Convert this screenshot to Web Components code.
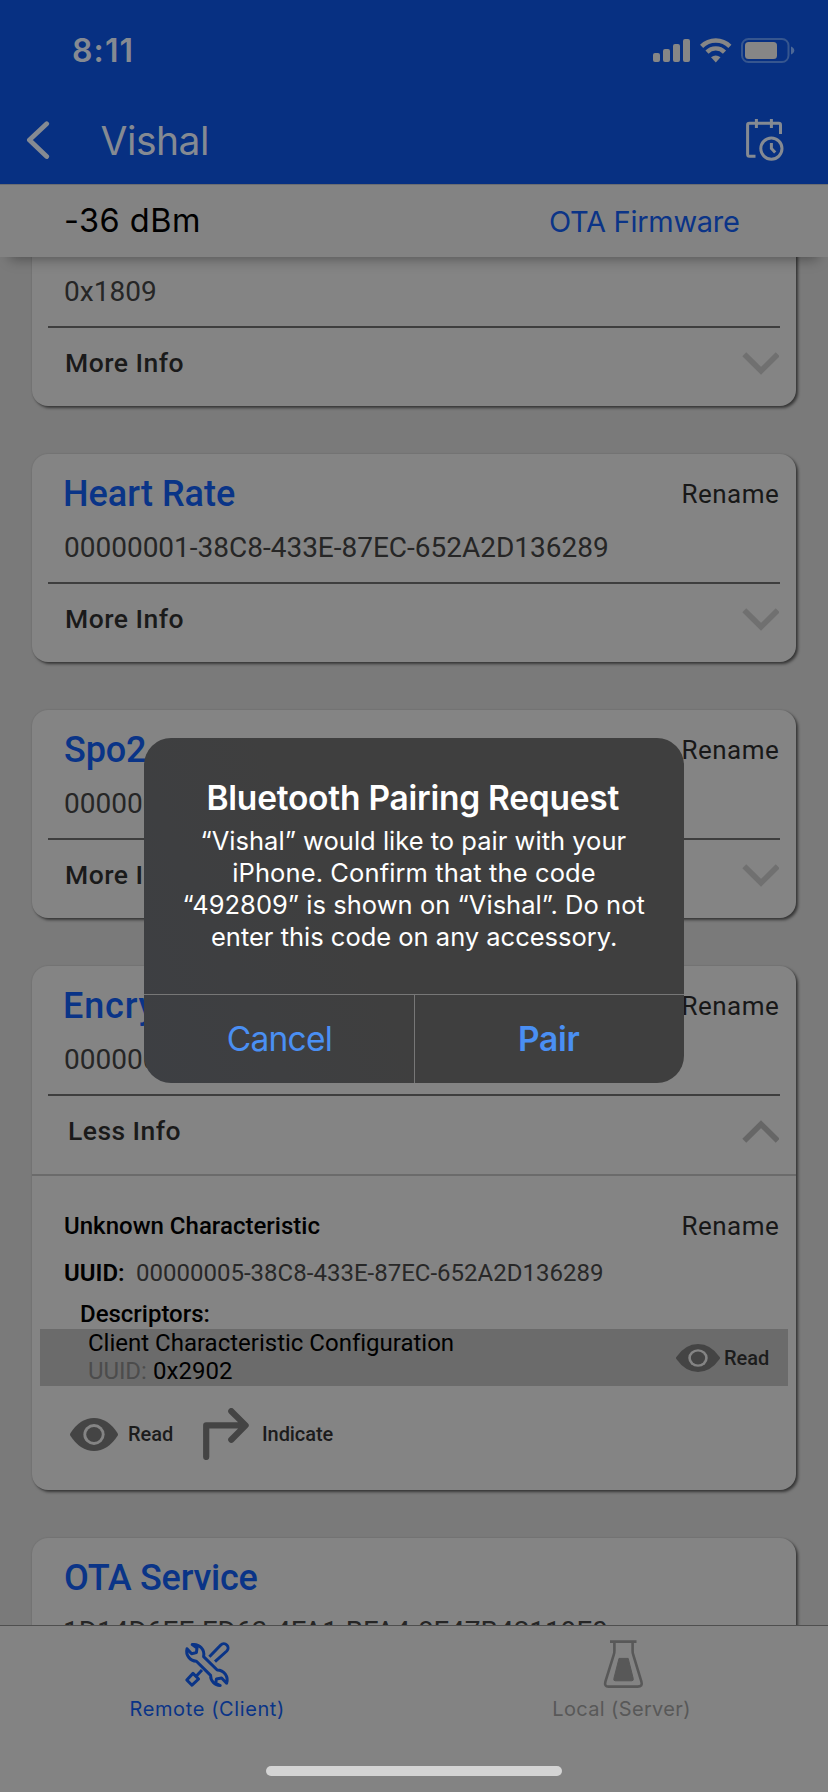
<!DOCTYPE html>
<html lang="en">
<head>
<meta charset="utf-8">
<title>Vishal</title>
<style>
html,body{margin:0;padding:0}
body{width:828px;height:1792px;overflow:hidden;background:#7a7a7a;font-family:Roboto,"Liberation Sans",sans-serif}
</style>
</head>
<body>
<device-screen></device-screen>
<script>
const UI = 'Inter,"Liberation Sans",sans-serif';
function define(name, html, after) {
  const t = document.createElement('template');
  t.innerHTML = html;
  customElements.define(name, class extends HTMLElement {
    connectedCallback() {
      if (this.shadowRoot) return;
      this.attachShadow({mode: 'open'}).append(t.content.cloneNode(true));
      if (after) after(this, this.shadowRoot);
    }
  });
}

/* One line of text, tracked so that its glyphs span exactly `w` pixels. */
define('ui-text', `<style>:host{display:block;white-space:nowrap;flex:none}span{display:block;white-space:pre}</style><span></span>`, (el, root) => {
  const span = root.querySelector('span');
  const text = el.getAttribute('text');
  span.textContent = text;
  const w = parseFloat(el.getAttribute('w'));
  const cs = getComputedStyle(el);
  const ctx = document.createElement('canvas').getContext('2d');
  ctx.font = `${cs.fontWeight} ${cs.fontSize} ${cs.fontFamily}`;
  const m = ctx.measureText(text);
  const ink = m.actualBoundingBoxLeft + m.actualBoundingBoxRight;
  el.style.width = w + 'px';
  span.style.letterSpacing = ((w - ink) / (text.length - 1)).toFixed(3) + 'px';
  span.style.marginLeft = m.actualBoundingBoxLeft.toFixed(2) + 'px';
});

define('eye-icon', `<style>:host{display:block;flex:none}svg{display:block;width:100%;height:100%}</style>
<svg viewBox="0 0 47 33" preserveAspectRatio="none"><path d="M.4 15.2Q10 0 23.5 0T46.6 15.2Q47.4 16.5 46.6 17.8Q37 33 23.5 33T.4 17.8Q-.4 16.5 .4 15.2Z" fill="#444"/><circle cx="23.5" cy="16.5" r="10.4" fill="#848484"/><circle cx="23.5" cy="16.5" r="7.6" fill="#444"/></svg>`);

define('chevron-icon', `<style>:host{display:block;flex:none;width:37px;height:23px;color:#707070}:host([up]){color:#666}:host([up]) svg{transform:scaleY(-1)}svg{display:block}</style>
<svg width="37" height="23" viewBox="0 0 37 23" fill="none" stroke="currentColor" stroke-width="5.6"><path d="M2.3 2.3L19 18.8L35.7 2.3"/></svg>`);

define('status-bar', `<style>
:host{display:flex;height:98px;box-sizing:border-box;padding:0 33px 0 73px;justify-content:space-between;align-items:center;color:#858a92;font:600 32px/98px ${UI}}
ui-text{margin-top:3px}svg{display:block;margin-top:3px}</style>
<ui-text text="8:11" w="58.5"></ui-text>
<svg width="142" height="26" viewBox="0 0 142 26" fill="#868686"><rect x="0" y="15" width="7" height="9" rx="2"/><rect x="10" y="11" width="7" height="13" rx="2"/><rect x="20" y="6" width="7" height="18" rx="2"/><rect x="30" y="1" width="7" height="23" rx="2"/>
<g fill="none" stroke="#868686" stroke-width="4.4"><path d="M48.6 8.4A20 20 0 0 1 76.9 8.4"/><path d="M54 14.1A12.2 12.2 0 0 1 71.5 14.1"/></g><path d="M58 19.3Q62.8 15.7 67.5 19.3L62.8 24.6Z"/>
<rect x="89" y="1" width="46.5" height="23" rx="6.5" fill="none" stroke="#36568f" stroke-width="2"/><rect x="92" y="4" width="32" height="17" rx="3.5"/><path d="M138 8.5Q141.3 9.8 141.3 12.5T138 16.5Z" fill="#4c6796"/></svg>`);

define('nav-bar', `<style>
:host{display:flex;height:86px;box-sizing:border-box;padding:0 42px 0 26px;align-items:center;color:#858a92;font:400 39px/86px ${UI}}
svg{display:block}.cal{margin:-3px 0 0 auto}ui-text{margin-left:49.5px;line-height:81px;height:83px}</style>
<svg width="25" height="40" viewBox="0 0 25 40" fill="none" stroke="#858a92" stroke-width="4.8" stroke-linecap="round" stroke-linejoin="round"><path d="M20.7 2.8L3.4 19L20.7 35.5"/></svg>
<ui-text text="Vishal" w="106.5"></ui-text>
<svg class="cal" width="41" height="44" viewBox="0 0 41 44" fill="none" stroke="#858a92" stroke-width="3"><path d="M35.5 16V7Q35.5 5.3 33.8 5.3H4.4Q2.6 5.3 2.6 7V36.3Q2.6 38.3 4.4 38.3H10.5M11.4 1V10M26.4 1V10M26.4 25V30.5L30.2 34.6"/><circle cx="26.4" cy="30.6" r="10.6"/></svg>`);

define('signal-bar', `<style>
:host{display:flex;position:relative;z-index:1;height:73px;box-sizing:border-box;border-top:1px solid #6b6d72;padding:0 89px 0 66px;justify-content:space-between;background:#838383;box-shadow:0 12px 12px -10px rgba(0,0,0,.36);font-family:${UI}}
.a{font-size:32.5px;line-height:71px;color:#000}.b{font-size:29px;line-height:74px;color:#0b3487}</style>
<ui-text class="a" text="-36 dBm" w="132"></ui-text><ui-text class="b" text="OTA Firmware" w="189"></ui-text>`);

define('service-card', `<style>
:host{display:block;flex:none;background:#848484;border-radius:16px;box-shadow:2px 2px 3px rgba(0,0,0,.55),0 0 2px rgba(0,0,0,.12);padding-bottom:8px}
.row{display:flex;justify-content:space-between;padding:0 18px 0 33px}
.head{height:80px;line-height:80px}
.name{font-size:36px;font-weight:500;color:#0a3487}
.ren{font-size:26px;line-height:81px;color:#181818}
.uuid{height:27px;line-height:27px;font-size:28px;color:#262626;padding-bottom:21px}
.rule{height:2px;margin:0 16px;background:#3e3e3e}
.more{height:70px;line-height:70px;font-size:26.5px;font-weight:500;color:#1a1a1a;padding:0 17px 0 34px;align-items:center}
:host([open]) .more{padding-left:37px}
</style>
<div class="row head"></div><div class="row uuid"></div><div class="rule"></div><div class="row more"></div><slot></slot>`, (el, root) => {
  const a = n => el.getAttribute(n);
  const open = el.hasAttribute('open');
  root.querySelector('.head').innerHTML =
    (a('name') ? `<ui-text class="name" text="${a('name')}" w="${a('nw')}"></ui-text>` : '') +
    (el.hasAttribute('renamable') ? '<ui-text class="ren" text="Rename" w="94.5"></ui-text>' : '');
  root.querySelector('.uuid').innerHTML = `<ui-text text="${a('uuid')}" w="${a('uw')}"></ui-text>`;
  root.querySelector('.more').innerHTML = open
    ? `<ui-text text="Less Info" w="111.5"></ui-text><chevron-icon up></chevron-icon>`
    : `<ui-text text="More Info" w="117.5"></ui-text><chevron-icon></chevron-icon>`;
});

define('characteristic-detail', `<style>
:host{display:block;margin-top:8px;border-top:2px solid #6b6b6b;padding-top:25px;color:#000;font-size:24px}
.top{display:flex;justify-content:space-between;height:50px;line-height:50px;padding:0 18px 0 33px}
.top .ren{font-size:26px;line-height:51px;color:#181818}
.id{display:flex;gap:13px;height:43px;line-height:44px;padding-left:33px}
.v{color:#282828}
.m{font-weight:500}
.desc{margin:4px 0 0 49px;height:31px;line-height:32px}
.band{display:flex;justify-content:space-between;align-items:center;margin:0 8px;height:57px;background:#6b6b6b;padding:0 19px 0 49px}
.l1{line-height:28px}.l2{display:flex;gap:8px;line-height:28px;margin-bottom:2px}.g{color:#4c4c4c}
.act{display:flex;align-items:center;font-size:20px;font-weight:500;color:#1c1c1c}
.read{gap:5px}.read eye-icon{width:44px;height:28px}
.acts{height:96px;padding-left:38px}
.acts eye-icon{width:48px;height:33px;margin-right:11px}
.acts svg{margin:0 14px 0 30px;display:block}
</style>
<div class="top"><ui-text class="m" text="Unknown Characteristic" w="254.5"></ui-text><ui-text class="ren" text="Rename" w="94.5"></ui-text></div>
<div class="id"><ui-text style="font-weight:600" text="UUID:" w="59"></ui-text><ui-text class="v" text="00000005-38C8-433E-87EC-652A2D136289" w="465"></ui-text></div>
<div class="desc"><ui-text class="m" text="Descriptors:" w="127.5"></ui-text></div>
<div class="band"><div><ui-text class="l1" text="Client Characteristic Configuration" w="363"></ui-text><div class="l2"><ui-text class="g" text="UUID:" w="57"></ui-text><ui-text text="0x2902" w="78"></ui-text></div></div>
<div class="act read"><eye-icon></eye-icon><ui-text text="Read" w="44"></ui-text></div></div>
<div class="act acts"><eye-icon></eye-icon><ui-text text="Read" w="44"></ui-text>
<svg width="46" height="52" viewBox="0 0 46 52" fill="none" stroke="#444" stroke-width="6.2" stroke-linecap="round" stroke-linejoin="round"><path d="M3.2 49V17.4H42M28.3 3.2L42.6 17.4L28.3 31.8"/></svg>
<ui-text text="Indicate" w="70.5"></ui-text></div>`);

define('service-list', `<style>
:host{display:block;height:1368px;overflow:hidden;background:#7a7a7a}
div{display:flex;flex-direction:column;gap:48px;margin:-59px 32px 0}</style>
<div><slot></slot></div>`);

define('tab-bar', `<style>
:host{display:block;height:167px;box-sizing:border-box;border-top:1px solid #4f4f4f;background:#838383;font:400 20px/26px ${UI}}
.tabs{display:flex}
.tab{flex:1;display:flex;flex-direction:column;align-items:center;height:140px;box-sizing:border-box;padding-top:13px}
svg{display:block;width:48px;height:50px;margin-bottom:7px}
.on{color:#0a3487;padding-right:1px}.off{color:#585858}
.home{width:296px;height:10px;border-radius:5px;background:#d4d4d4;margin:0 auto}</style>
<div class="tabs"><div class="tab on">
<svg viewBox="0 0 48 50" fill="none" stroke="currentColor" stroke-width="3" stroke-linejoin="round"><path d="M9.2 5.6A10 10 0 0 1 20.6 17.6L34.2 31A10 10 0 0 1 43.6 44.2L38.6 39L33.4 40L32.8 44.2L37.2 46.6A10 10 0 0 1 27.6 36.4L13.4 22.2A10 10 0 0 1 4 9.8L8.6 14.8L13.4 13.6L14 9Z"/><path d="M26.4 17.8L37.8 6A4.2 4.2 0 0 1 43.8 12L32 22.6M19 31L13.4 37M10 34.4L15.6 40L9 46.2L3.8 41Z"/></svg>
<ui-text text="Remote (Client)" w="152.5"></ui-text></div>
<div class="tab off">
<svg viewBox="0 0 48 50" fill="none" stroke="currentColor" stroke-width="2.6" stroke-linejoin="round"><path d="M13 2.6H39.5M17.4 3V12Q17.4 14 16.8 15.6L8.4 42.6Q7 47.6 11.6 47.6H40.6Q46 47.6 44.4 42.6L36.2 15.6Q35.6 14 35.6 12V3"/><path d="M22 19.4H31.2L36.2 39.4Q36.8 41.8 34.6 41.8H18.4Q16.2 41.8 16.9 39.4Z" fill="currentColor" stroke-width="1"/></svg>
<ui-text text="Local (Server)" w="136"></ui-text></div></div>
<div class="home"></div>`);

define('pairing-dialog', `<style>
:host{display:block;position:absolute;left:144px;top:738px;width:540px;height:344.5px;border-radius:27px;overflow:hidden;background:linear-gradient(65deg,#3d3f43,#3f3f3f 40%,#3f3f3f);color:#fff;font-family:${UI}}
.msg{height:256px;box-sizing:border-box;padding-top:40px;display:flex;flex-direction:column;align-items:center;font-size:25.5px;line-height:32px}
.t{font-size:33.5px;font-weight:600;line-height:40px;margin-bottom:7px}
.btns{display:flex;border-top:1px solid #777;height:88px;line-height:88px;font-size:33.5px;color:#4a8ff3}
.btns div{flex:1;display:flex;justify-content:center;padding-left:1px}.btns div+div{border-left:1px solid #777;font-weight:600}
</style>
<div class="msg"><ui-text class="t" text="Bluetooth Pairing Request" w="411"></ui-text>
<ui-text text="“Vishal” would like to pair with your" w="425"></ui-text>
<ui-text text="iPhone. Confirm that the code" w="361.5"></ui-text>
<ui-text text="“492809” is shown on “Vishal”. Do not" w="461"></ui-text>
<ui-text text="enter this code on any accessory." w="404"></ui-text></div>
<div class="btns"><div><ui-text text="Cancel" w="103"></ui-text></div><div><ui-text text="Pair" w="59.5"></ui-text></div></div>`);

define('device-screen', `<style>
:host{display:block;position:relative;width:828px;height:1792px;overflow:hidden;background:#7a7a7a}
header{background:#073082}</style>
<header><status-bar></status-bar><nav-bar></nav-bar></header>
<signal-bar></signal-bar>
<service-list>
<service-card uuid="0x1809" uw="90"></service-card>
<service-card renamable name="Heart Rate" nw="170" uuid="00000001-38C8-433E-87EC-652A2D136289" uw="542"></service-card>
<service-card renamable name="Spo2" nw="81" uuid="00000002-38C8-433E-87EC-652A2D136289" uw="542"></service-card>
<service-card renamable name="Encrypted" nw="165" uuid="00000004-38C8-433E-87EC-652A2D136289" uw="542" open><characteristic-detail></characteristic-detail></service-card>
<service-card name="OTA Service" nw="192.5" uuid="1D14D6EE-FD63-4FA1-BFA4-8F47B42119F0" uw="542"></service-card>
</service-list>
<tab-bar></tab-bar>
<pairing-dialog></pairing-dialog>`);
</script>
</body>
</html>
